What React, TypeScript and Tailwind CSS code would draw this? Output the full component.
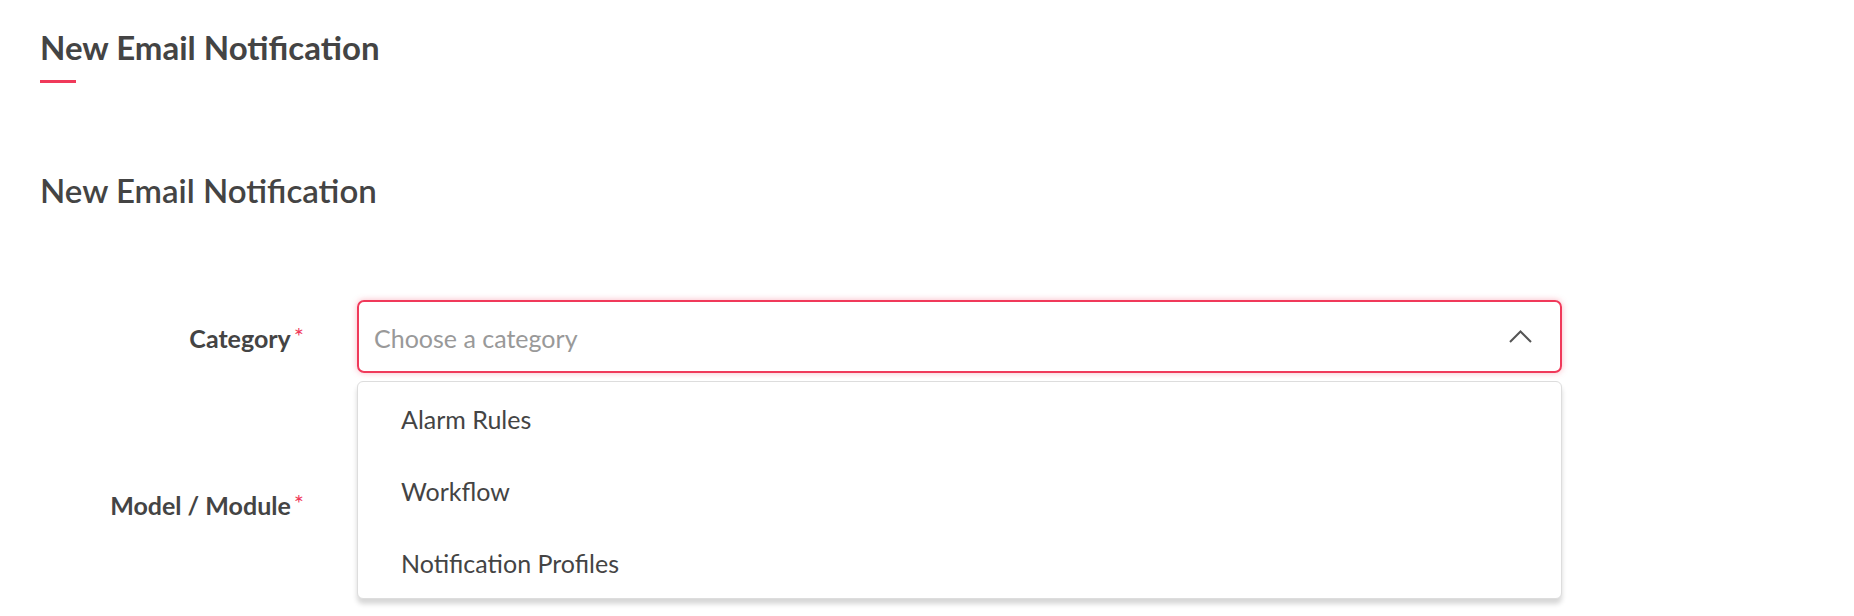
const font = { fontFamily: 'Lato, "Noto Sans", sans-serif' };

const options = ['Alarm Rules', 'Workflow', 'Notification Profiles'];

function Label({ text }: { text: string }) {
  return (
    <div className="flex w-[264px] shrink-0 items-start justify-end pt-[4px]">
      <span className="text-[25px] font-bold leading-none text-[#444444]">{text}</span>
      <span className="ml-[3px] mt-[-2px] text-[24px] leading-none text-[#f0395a]">*</span>
    </div>
  );
}

function ChevronUp() {
  return (
    <svg width="23" height="13" viewBox="0 0 23 13" fill="none">
      <path d="M1 12 L11.5 1.5 L22 12" stroke="#555555" strokeWidth="2" />
    </svg>
  );
}

export default function App() {
  return (
    <div className="min-h-[616px] w-full bg-white pl-[40px]" style={font}>
      <div className="pt-[28px]">
        <h1 className="text-[33px] font-bold leading-[1.2] text-[#444444]">New Email Notification</h1>
        <div className="mt-[12px] h-[3px] w-[36px] bg-[#f0395a]" />
      </div>

      <h2 className="mt-[88px] text-[33px] font-semibold leading-[1.2] text-[#444444]">New Email Notification</h2>

      <div className="mt-[90px] flex flex-col gap-[94px]">
        <div className="flex items-center">
          <Label text="Category" />
          <div className="relative ml-[53px] w-[1205px]">
            <div className="flex h-[73px] items-center justify-between rounded-[7px] border-2 border-[#f0395a] pl-[15px] pr-[28px] shadow-[0_0_6px_rgba(240,57,90,0.35)]">
              <span className="pt-[4px] text-[25px] text-[#999999]">Choose a category</span>
              <ChevronUp />
            </div>
            <div className="absolute left-0 right-0 top-[81px] z-10 rounded-[6px] border border-[#dddddd] bg-white shadow-[0_5px_5px_rgba(0,0,0,0.16)]">
              {options.map((o) => (
                <div key={o} className="flex h-[72px] items-center pl-[43px] pt-[3px] text-[25px] text-[#444444]">
                  {o}
                </div>
              ))}
            </div>
          </div>
        </div>

        <div className="flex items-center">
          <Label text="Model / Module" />
          <div className="ml-[53px] flex h-[73px] w-[1205px] items-center rounded-[7px] border border-[#dddddd]" />
        </div>
      </div>
    </div>
  );
}
